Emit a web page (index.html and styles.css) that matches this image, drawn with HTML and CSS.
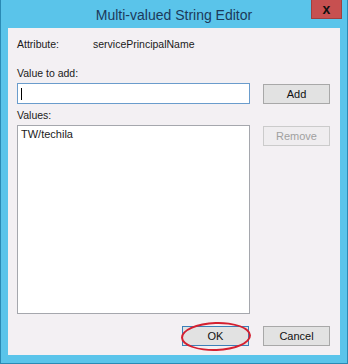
FILE: index.html
```html
<!DOCTYPE html>
<html lang="en">
<head>
    <meta charset="UTF-8">
    <title>Multi-valued String Editor</title>
    <link rel="stylesheet" href="styles.css">
</head>
<body>

<div class="window">
    <div class="titlebar">
        <span class="title">Multi-valued String Editor</span>
        <button class="close">x</button>
    </div>

    <div class="client">
        <div class="attr-row">
            <span class="attr-label">Attribute:</span>
            <span class="attr-value">servicePrincipalName</span>
        </div>

        <div class="label add-label">Value to add:</div>
        <div class="row">
            <div class="textbox"><span class="caret"></span></div>
            <button class="btn add-btn">Add</button>
        </div>

        <div class="label values-label">Values:</div>
        <div class="row">
            <div class="listbox">
                <div class="item">TW/techila</div>
            </div>
            <button class="btn remove-btn" disabled>Remove</button>
        </div>

        <div class="footer">
            <button class="btn ok-btn">OK<span class="circle"></span></button>
            <button class="btn">Cancel</button>
        </div>
    </div>
</div>

</body>
</html>
```

FILE: styles.css
```css
body {
    margin: 0;
    font-family: "Liberation Sans", Arial, sans-serif;
    background: #fff;
}
.window {
    width: 348px;
    height: 364px;
    box-sizing: border-box;
    background: #5ac4ea;
    border: 1px solid #2a8ab4;
    border-top: none;
    padding: 0 7px 8px 7px;
    display: flex;
    flex-direction: column;
}
.titlebar {
    height: 28px;
    position: relative;
    display: flex;
    justify-content: center;
    align-items: center;
}
.title {
    font-size: 14px;
    color: #1c3a5a;
    padding-top: 2px;
}
.close {
    position: absolute;
    top: 0;
    right: -2px;
    width: 31px;
    height: 19px;
    border: 1px solid #a04040;
    border-top: none;
    background: #c75050;
    color: #111;
    font-size: 14px;
    line-height: 14px;
    font-weight: bold;
    padding: 0;
    font-family: "Liberation Sans", Arial, sans-serif;
}
.client {
    flex: 1;
    background: #f3f0f3;
    padding: 0 10px 0 9px;
    font-size: 10.5px;
    color: #1a1a1a;
}
.attr-row {
    display: flex;
    margin-top: 9px;
    height: 14px;
    line-height: 14px;
}
.attr-label {
    width: 76px;
}
.label {
    height: 14px;
    line-height: 14px;
}
.add-label {
    margin-top: 15px;
    margin-bottom: 3px;
}
.values-label {
    margin-top: 4px;
    margin-bottom: 3px;
}
.row {
    display: flex;
    gap: 13px;
    align-items: flex-start;
}
.textbox {
    width: 233px;
    height: 21px;
    box-sizing: border-box;
    border: 1px solid #6a9ccc;
    background: #fff;
    display: flex;
    align-items: center;
    padding-left: 3px;
}
.caret {
    width: 1px;
    height: 12px;
    background: #000;
}
.listbox {
    width: 233px;
    height: 189px;
    box-sizing: border-box;
    border: 1px solid #a5a7ad;
    background: #fff;
    padding: 1px 3px;
}
.item {
    line-height: 14px;
    font-size: 11px;
}
.btn {
    width: 67px;
    height: 20px;
    box-sizing: border-box;
    border: 1px solid #a8a8a8;
    background: #e2e2e2;
    font-family: "Liberation Sans", Arial, sans-serif;
    font-size: 11px;
    color: #111;
    padding: 0;
    position: relative;
}
.add-btn {
    margin-top: 1px;
}
.remove-btn {
    margin-top: 1px;
    border-color: #cbcbcb;
    background: #efedef;
    color: #a0a0a0;
}
.footer {
    display: flex;
    justify-content: flex-end;
    gap: 14px;
    margin-top: 12px;
}
.ok-btn {
    border-color: #3c80b8;
}
.circle {
    position: absolute;
    left: -2px;
    top: -5px;
    width: 70px;
    height: 29px;
    box-sizing: border-box;
    border: 2px solid #d42030;
    border-radius: 50%;
    transform: rotate(-2deg);
}
```
